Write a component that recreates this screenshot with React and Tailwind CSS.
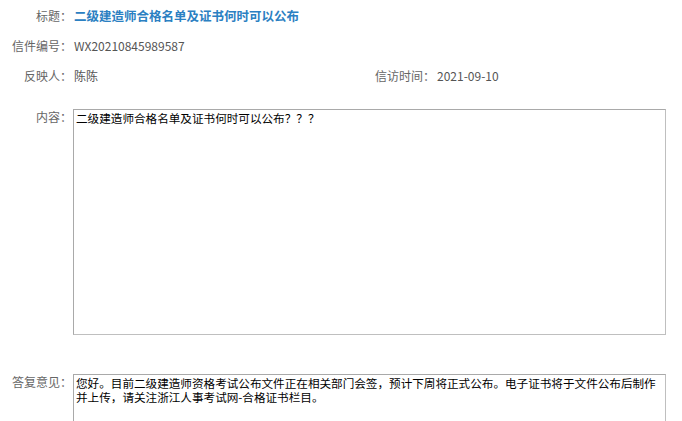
import React from "react";

const font = { fontFamily: '"Noto Sans CJK SC", "Noto Sans", sans-serif' };

function Label({ children }) {
  return (
    <div className="w-[72px] shrink-0 text-right text-[12px] text-[#666]">{children}</div>
  );
}

export default function App() {
  return (
    <div
      className="w-[682px] h-[421px] overflow-hidden bg-white pt-[1px]"
      style={font}
    >
      <div className="flex h-[30px] items-center">
        <Label>标题：</Label>
        <div className="ml-[2px] text-[12.5px] font-bold text-[#2b80c2]">
          二级建造师合格名单及证书何时可以公布
        </div>
      </div>
      <div className="flex h-[30px] items-center">
        <Label>信件编号：</Label>
        <div className="ml-[2px] text-[12px] text-[#555]">WX20210845989587</div>
      </div>
      <div className="flex h-[30px] items-center">
        <div className="flex w-[375px] items-center">
          <Label>反映人：</Label>
          <div className="ml-[2px] text-[12px] text-[#555]">陈陈</div>
        </div>
        <div className="text-[12px] text-[#666]">信访时间：</div>
        <div className="ml-[2px] text-[12px] text-[#555]">2021-09-10</div>
      </div>

      <div className="mt-[18px] flex items-start">
        <div className="pt-[1px] leading-[14px]">
          <Label>内容：</Label>
        </div>
        <div className="ml-[1px] h-[226px] w-[593px] border border-[#bfbfbf] border-t-[#a9a9a9] border-l-[#a9a9a9] px-[2px] pt-[1px] text-[11.6px] leading-[14px] text-black">
          二级建造师合格名单及证书何时可以公布？？？
        </div>
      </div>

      <div className="mt-[39px] flex items-start">
        <div className="pt-[1px] leading-[14px]">
          <Label>答复意见：</Label>
        </div>
        <div className="ml-[1px] h-[120px] w-[593px] border border-[#bfbfbf] border-t-[#a9a9a9] border-l-[#a9a9a9] px-[2px] pt-[1px] text-[11.6px] leading-[14px] text-black">
          您好。目前二级建造师资格考试公布文件正在相关部门会签，预计下周将正式公布。电子证书将于文件公布后制作并上传，请关注浙江人事考试网-合格证书栏目。
        </div>
      </div>
    </div>
  );
}
